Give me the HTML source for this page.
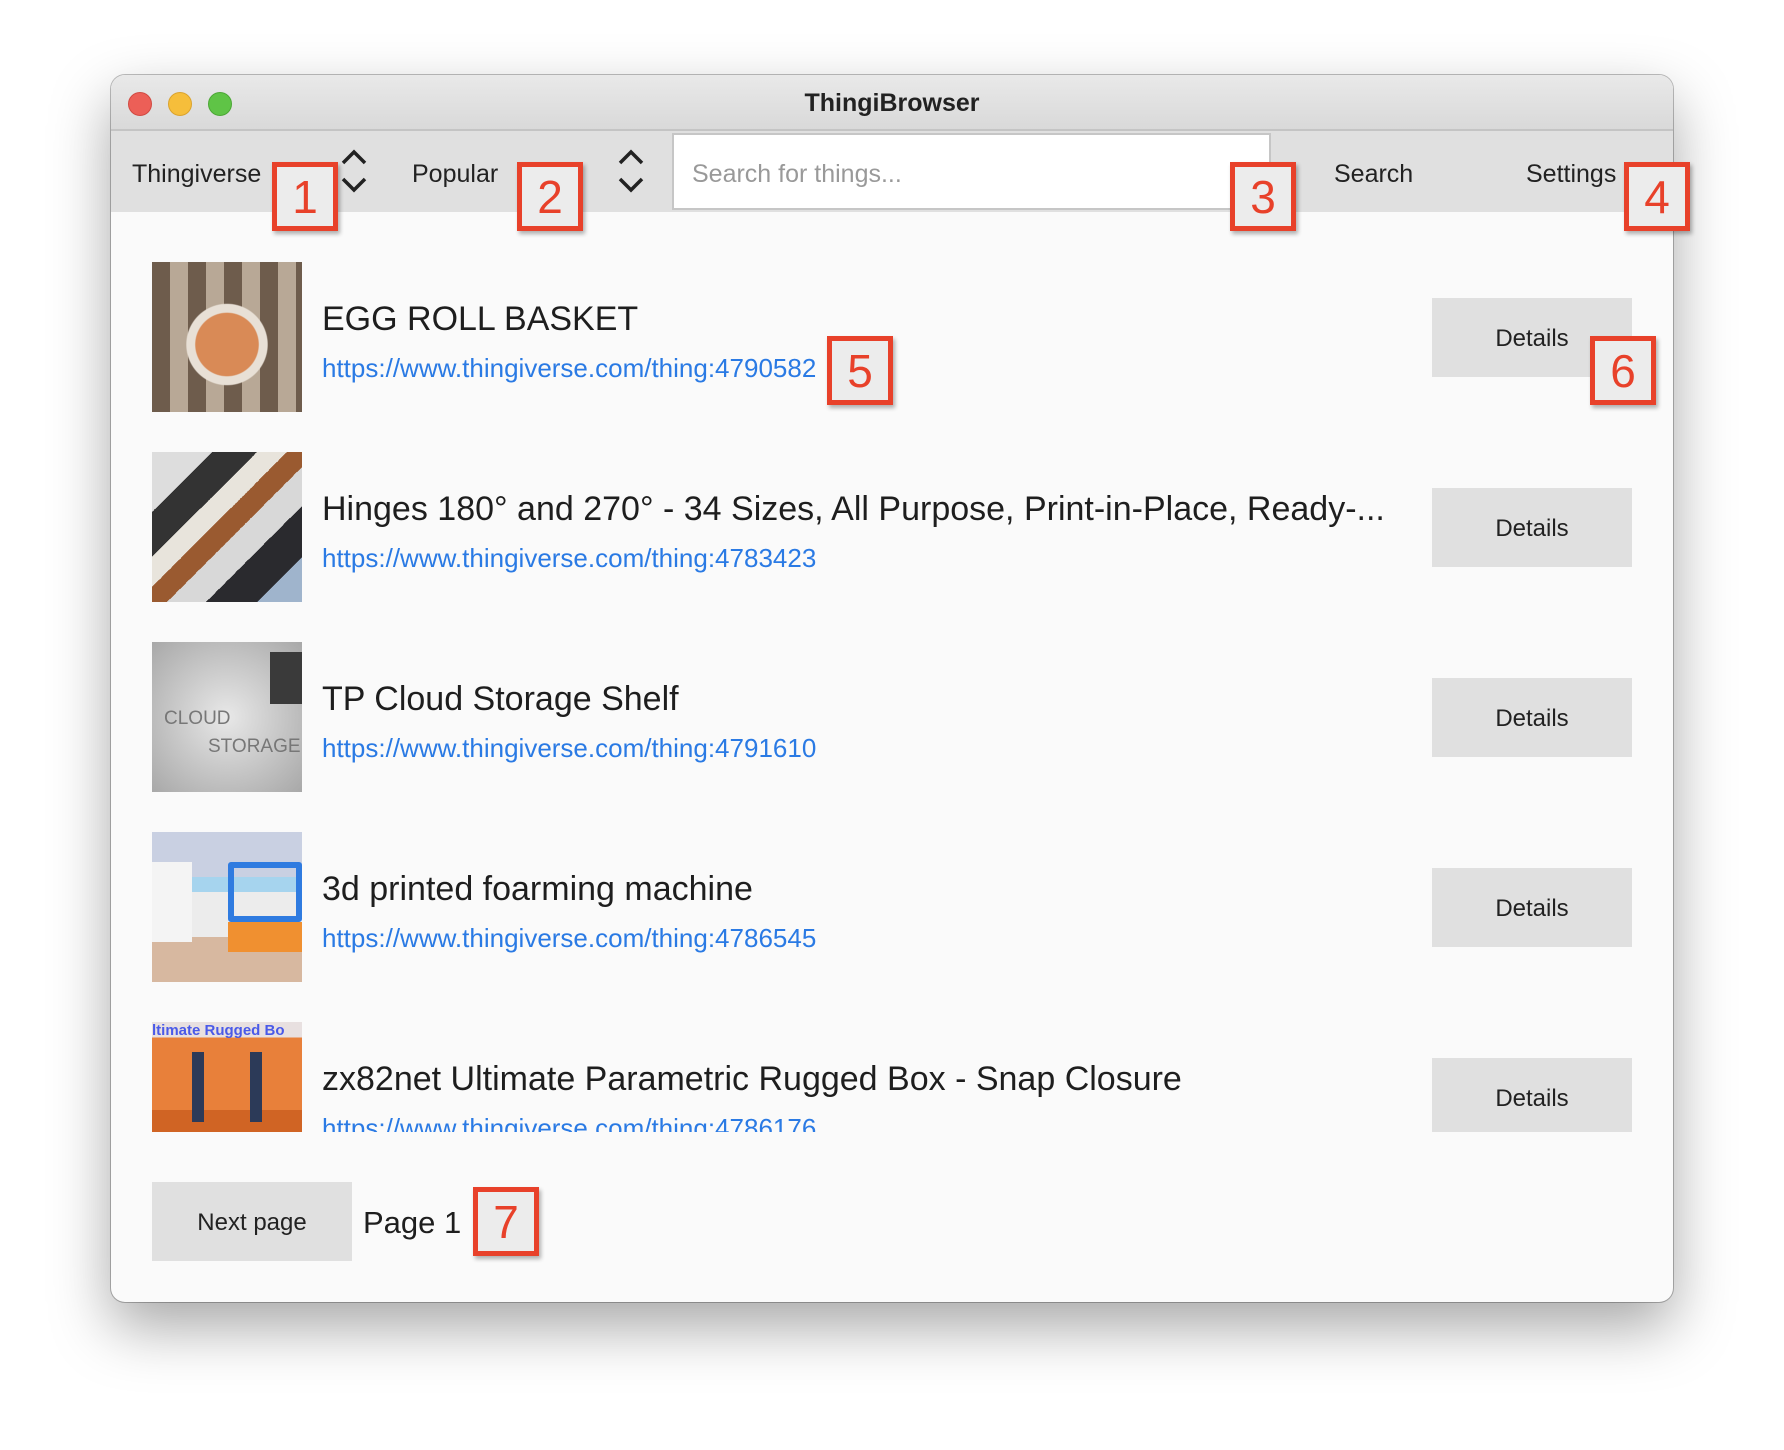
<!DOCTYPE html>
<html><head><meta charset="utf-8"><style>
*{margin:0;padding:0;box-sizing:border-box}
body{width:1784px;height:1450px;background:#fff;position:relative;overflow:hidden;font-family:"Liberation Sans",sans-serif;color:#222}
.win{position:absolute;left:111px;top:75px;width:1562px;height:1227px;border-radius:14px;background:#fafafa;box-shadow:0 25px 60px rgba(0,0,0,.35),0 0 0 1px rgba(0,0,0,.25);overflow:hidden}
.title{position:absolute;left:0;top:0;width:100%;height:56px;background:linear-gradient(#e9e9e9,#d9d9d9);border-bottom:2px solid #c4c4c4;text-align:center;font-weight:bold;font-size:25px;line-height:56px;color:#222}
.dot{position:absolute;top:17px;width:24px;height:24px;border-radius:50%}
.tb{position:absolute;left:0;top:56px;width:100%;height:81px;background:#e0e0e0}
.abs{position:absolute}
.tt{font-size:25px;color:#222}
.search{position:absolute;left:561px;top:2px;width:599px;height:77px;background:#fff;border:2px solid #c6c6c6;font-size:25px;color:#999;padding:25px 18px}
.thumb{position:absolute;left:41px;width:150px;height:150px}
.name{position:absolute;left:211px;font-size:34px;color:#1e1e1e;white-space:nowrap}
.url{position:absolute;left:211px;font-size:26px;color:#2a7ae4}
.btn{position:absolute;left:1321px;width:200px;height:79px;background:#e0e0e0;font-size:24px;text-align:center;line-height:82px;color:#222}
.ann{position:absolute;width:66px;height:69px;border:5px solid #e8412a;background:#ececec;color:#e8412a;font-size:46px;text-align:center;line-height:60px;box-shadow:2px 3px 4px rgba(0,0,0,.3)}
</style></head><body>
<div class="win">
 <div class="title">ThingiBrowser
  <div class="dot" style="left:17px;background:#ec5f57;border:1px solid #d14a42"></div>
  <div class="dot" style="left:57px;background:#f6be3b;border:1px solid #dba32d"></div>
  <div class="dot" style="left:97px;background:#5fc446;border:1px solid #4ca736"></div>
 </div>
 <div class="tb">
  <div class="abs tt" style="left:21px;top:29px">Thingiverse</div>
  <svg class="abs" style="left:228px;top:18px" width="30" height="44" viewBox="0 0 30 44"><path d="M4 14 L15 3 L26 14 M4 30 L15 41 L26 30" stroke="#222" stroke-width="3.5" fill="none"/></svg>
  <div class="abs tt" style="left:301px;top:29px">Popular</div>
  <svg class="abs" style="left:505px;top:18px" width="30" height="44" viewBox="0 0 30 44"><path d="M4 14 L15 3 L26 14 M4 30 L15 41 L26 30" stroke="#222" stroke-width="3.5" fill="none"/></svg>
  <div class="search">Search for things...</div>
  <div class="abs tt" style="left:1223px;top:29px">Search</div>
  <div class="abs tt" style="left:1415px;top:29px">Settings</div>
 </div>

 <div class="thumb" style="top:187px;background:radial-gradient(circle at 50% 55%,#d98a56 0 28%,#e8e0d6 29% 36%,transparent 37%),repeating-linear-gradient(90deg,#6e5c4c 0 18px,#b8a896 18px 36px);"></div>
 <div class="name" style="top:225px">EGG ROLL BASKET</div>
 <div class="url" style="top:278px">https://www.thingiverse.com/thing:4790582</div>
 <div class="btn" style="top:223px">Details</div>

 <div class="thumb" style="top:377px;background:linear-gradient(135deg,#ddd 0 20%,#333 20% 35%,#e8e4dc 35% 45%,#9a5a30 45% 55%,#d8d8d8 55% 68%,#2a2a2e 68% 85%,#9fb4cc 85%);"></div>
 <div class="name" style="top:415px">Hinges 180° and 270° - 34 Sizes, All Purpose, Print-in-Place, Ready-...</div>
 <div class="url" style="top:468px">https://www.thingiverse.com/thing:4783423</div>
 <div class="btn" style="top:413px">Details</div>

 <div class="thumb" style="top:567px;background:radial-gradient(circle at 50% 50%,#e8e8e8,#a8a8a8);color:#777;font-size:19px;overflow:hidden"><span style="position:absolute;left:12px;top:66px">CLOUD</span><span style="position:absolute;left:56px;top:94px">STORAGE</span><div style="position:absolute;right:0;top:10px;width:32px;height:52px;background:#3a3a3a"></div></div>
 <div class="name" style="top:605px">TP Cloud Storage Shelf</div>
 <div class="url" style="top:658px">https://www.thingiverse.com/thing:4791610</div>
 <div class="btn" style="top:603px">Details</div>

 <div class="thumb" style="top:757px;background:linear-gradient(#c9d0e2 0 30%,#a6d4ee 30% 40%,#ececec 40% 70%,#d7b8a0 70%);overflow:hidden"><div style="position:absolute;left:76px;top:30px;width:74px;height:60px;border:6px solid #2f7be0;border-radius:3px"></div><div style="position:absolute;left:76px;top:90px;width:74px;height:30px;background:#f09030"></div><div style="position:absolute;left:0;top:30px;width:40px;height:80px;background:#f4f4f4"></div></div>
 <div class="name" style="top:795px">3d printed foarming machine</div>
 <div class="url" style="top:848px">https://www.thingiverse.com/thing:4786545</div>
 <div class="btn" style="top:793px">Details</div>

 <div style="position:absolute;left:0;top:947px;width:100%;height:110px;overflow:hidden">
  <div class="thumb" style="top:0;height:110px;background:linear-gradient(#e8e0e0 0 14%,#e8803a 14% 80%,#d06424 80%);overflow:hidden"><span style="position:absolute;left:0;top:0;font-size:15px;font-weight:bold;color:#4a5ae8;white-space:nowrap">ltimate Rugged Bo</span><div style="position:absolute;left:40px;top:30px;width:12px;height:70px;background:#2c3a58"></div><div style="position:absolute;left:98px;top:30px;width:12px;height:70px;background:#2c3a58"></div></div>
  <div class="name" style="top:38px">zx82net Ultimate Parametric Rugged Box - Snap Closure</div>
  <div class="url" style="top:91px">https://www.thingiverse.com/thing:4786176</div>
  <div class="btn" style="top:36px">Details</div>
 </div>

 <div class="btn" style="left:41px;top:1107px;width:200px;height:79px">Next page</div>
 <div class="abs" style="left:252px;top:1130px;font-size:31px;color:#1e1e1e">Page 1</div>
</div>

<div class="ann" style="left:272px;top:162px">1</div>
<div class="ann" style="left:517px;top:162px">2</div>
<div class="ann" style="left:1230px;top:162px">3</div>
<div class="ann" style="left:1624px;top:162px">4</div>
<div class="ann" style="left:827px;top:336px">5</div>
<div class="ann" style="left:1590px;top:336px">6</div>
<div class="ann" style="left:473px;top:1187px">7</div>
</body></html>
